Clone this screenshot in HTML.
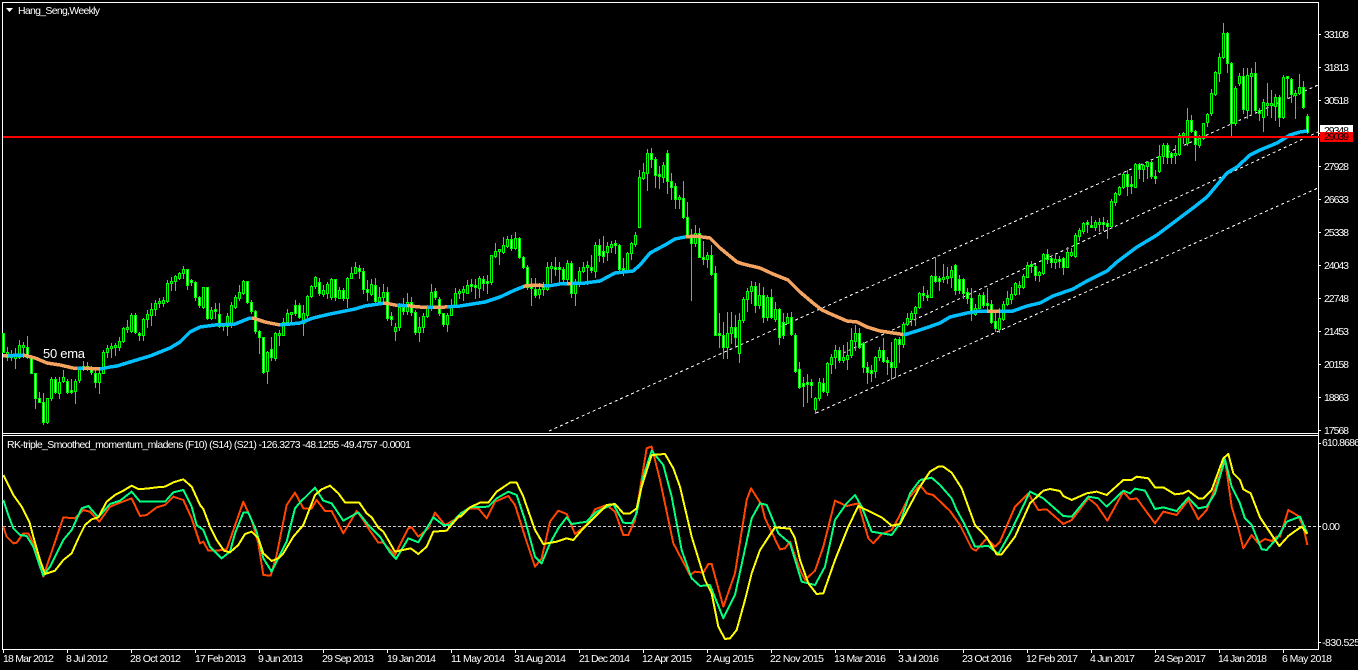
<!DOCTYPE html>
<html><head><meta charset="utf-8"><title>Hang_Seng,Weekly</title>
<style>
html,body{margin:0;padding:0;background:#000;width:1358px;height:670px;overflow:hidden}
svg{display:block}
text{font-family:"Liberation Sans",sans-serif;font-size:10.5px;fill:#fff}
.c{shape-rendering:crispEdges;fill:none}
</style></head><body>
<svg xmlns="http://www.w3.org/2000/svg" width="1358" height="670" viewBox="0 0 1358 670">
<defs>
<polyline id="ema" fill="none" points="3,356 23,355 35,358 47,363 60,365 73,368 83,368 100,369 110,367 117,366 130,362 150,356 170,348 180,342 190,332 200,327 215,325 235,324 250,318 253,318 265,322 280,325 300,323 313,318 330,314 340,312 355,309 365,306 385,303 395,305 410,306 420,307 445,307 460,306 485,302 500,297 515,290 525,286 535,285 548,286 560,284 585,283 600,281 615,273 633,271 640,265 650,253 665,245 675,239 685,237 695,236 710,238 720,248 737,262 743,264 760,268 773,274 788,280 800,292 813,303 822,310 833,315 847,321 857,322 867,327 880,331 900,334 907,334 923,329 940,323 950,317 967,313 980,311 1013,311 1027,306 1040,303 1053,296 1073,289 1087,281 1107,271 1117,262 1137,247 1157,235 1173,223 1193,208 1207,197 1217,185 1227,173 1237,167 1250,155 1260,150 1277,143 1290,135 1300,132 1307,131"/>
<clipPath id="or"><rect x="3" y="300" width="5" height="100"/><rect x="23" y="300" width="54" height="100"/><rect x="83" y="300" width="17" height="100"/><rect x="252" y="300" width="28" height="100"/><rect x="383" y="280" width="14" height="60"/><rect x="407" y="280" width="20" height="60"/><rect x="433" y="280" width="14" height="60"/><rect x="523" y="270" width="21" height="40"/><rect x="567" y="270" width="5" height="40"/><rect x="686" y="220" width="217" height="130"/><rect x="987" y="300" width="13" height="20"/></clipPath>
</defs>

<g class="c" stroke="#fff" stroke-width="1">
<path d="M2.5 2.5H1318.5V649.5H2.5Z"/>
<path d="M2 433.5H1319M2 435.5H1319"/>
<path d="M3.5 650V653"/>
<path d="M1318 34.5h3M1318 67.5h3M1318 100.5h3M1318 133.5h3M1318 166.5h3M1318 199.5h3M1318 232.5h3M1318 265.5h3M1318 298.5h3M1318 331.5h3M1318 364.5h3M1318 397.5h3M1318 430.5h3M1318 443.5h3M1318 526.5h3M1318 642.5h3"/>
<path d="M67.5 650v3M131.5 650v3M195.5 650v3M259.5 650v3M323.5 650v3M387.5 650v3M451.5 650v3M515.5 650v3M579.5 650v3M643.5 650v3M707.5 650v3M771.5 650v3M835.5 650v3M899.5 650v3M963.5 650v3M1027.5 650v3M1091.5 650v3M1155.5 650v3M1219.5 650v3M1283.5 650v3"/>
</g>

<g class="c" stroke="#fff" stroke-width="1" stroke-dasharray="3 3">
<path d="M549 431L1318 85"/>
<path d="M843 353L1318 132"/>
<path d="M816 413L1318 188"/>
</g>

<g class="c" transform="translate(.5 0)">
<path stroke="#0f0" stroke-width="1" d="M3 333V353M7 347V361M11 350V361M15 348V369M19 340V359M23 342V358M27 336V359M31 355V374M35 373V409M39 392V403M43 393V425M47 398V424M51 377V401M55 377V394M59 377V399M63 370V383M67 379V394M71 379V394M75 379V404M79 367V383M83 361V371M87 362V371M91 366V375M95 368V388M99 370V394M103 350V374M107 345V358M111 343V358M115 343V356M119 337V351M123 327V343M127 320V333M131 313V333M135 313V334M139 332V341M143 318V341M147 310V328M151 303V326M155 300V316M159 298V308M163 297V307M167 280V303M171 277V291M175 275V291M179 272V280M183 266V279M187 269V290M191 279V286M195 281V301M199 296V308M203 287V309M207 287V320M211 307V320M215 303V319M219 303V328M223 325V331M227 313V336M231 302V328M235 295V309M239 285V301M243 280V295M247 281V304M251 300V314M255 310V334M259 330V354M263 337V374M267 351V384M271 337V361M275 332V361M279 330V346M283 318V336M287 309V324M291 312V324M295 300V316M299 303V319M303 305V336M307 295V318M311 285V298M315 276V289M319 278V296M323 285V297M327 282V299M331 278V300M335 279V301M339 287V299M343 288V301M347 277V308M351 267V279M355 262V274M359 265V279M363 268V294M367 280V301M371 279V296M375 278V304M379 287V304M383 284V302M387 287V321M391 312V326M395 323V341M399 303V331M403 298V315M407 293V315M411 297V316M415 310V335M419 317V342M423 313V333M427 305V318M431 284V311M435 288V300M439 297V316M443 313V327M447 313V332M451 299V316M455 288V308M459 289V299M463 286V301M467 280V294M471 279V292M475 279V299M479 276V298M483 276V291M487 275V294M491 255V285M495 243V258M499 249V265M503 237V254M507 236V248M511 235V251M515 232V250M519 237V259M523 256V269M527 265V290M531 278V306M535 278V298M539 283V299M543 282V296M547 262V291M551 262V283M555 257V276M559 262V283M563 267V283M567 260V284M571 261V298M575 279V306M579 267V287M583 262V273M587 261V285M591 255V273M595 242V278M599 239V262M603 236V263M607 242V261M611 241V253M615 240V254M619 244V271M623 258V276M627 252V273M631 242V260M635 232V247M639 170V228M643 163V180M647 149V191M651 148V168M655 157V188M659 166V189M663 162V183M667 150V194M671 173V200M675 183V209M679 195V209M683 181V219M687 202V238M691 229V301M695 225V247M699 228V258M703 241V265M707 252V268M711 245V276M715 266V336M719 313V348M723 322V359M727 312V359M731 312V344M735 315V346M739 313V363M743 297V323M747 288V312M751 281V304M755 282V313M759 283V309M763 287V323M767 295V321M771 289V319M775 302V322M779 308V345M783 313V339M787 313V324M791 312V336M795 333V373M799 362V389M803 377V407M807 374V403M811 379V398M815 397V414M819 378V401M823 378V393M827 362V396M831 354V374M835 345V369M839 347V363M843 345V363M847 342V370M851 328V358M855 325V351M859 328V349M863 342V373M867 362V384M871 365V382M875 356V378M879 347V361M883 338V363M887 357V375M891 342V380M895 338V378M899 337V363M903 322V348M907 313V326M911 311V326M915 306V326M919 292V309M923 286V301M927 290V301M931 275V298M935 257V283M939 276V291M943 264V283M947 267V284M951 266V288M955 264V295M959 275V294M963 278V299M967 288V304M971 288V321M975 304V316M979 293V309M983 292V308M987 288V313M991 300V324M995 313V332M999 308V333M1003 301V321M1007 291V306M1011 287V304M1015 282V296M1019 281V295M1023 274V289M1027 262V278M1031 261V273M1035 264V281M1039 271V282M1043 253V275M1047 249V264M1051 256V268M1055 255V269M1059 256V268M1063 257V275M1067 247V268M1071 248V257M1075 233V258M1079 228V241M1083 222V234M1087 220V233M1091 216V228M1095 220V231M1099 218V232M1103 217V231M1107 220V239M1111 199V228M1115 192V206M1119 186V196M1123 173V189M1127 170V196M1131 176V194M1135 163V188M1139 163V179M1143 164V182M1147 161V179M1151 161V179M1155 170V184M1159 145V173M1163 143V164M1167 143V164M1171 152V164M1175 145V164M1179 133V156M1183 132V144M1187 108V146M1191 115V133M1195 130V161M1199 135V148M1203 123V140M1207 113V127M1211 89V116M1215 71V96M1219 53V82M1223 23V59M1227 32V73M1231 62V137M1235 86V126M1239 73V86M1243 68V114M1247 68V119M1251 68V114M1255 62V114M1259 108V121M1263 99V132M1267 83V116M1271 90V118M1275 94V121M1279 95V127M1283 75V119M1287 76V98M1291 78V103M1295 90V119M1299 74V95M1303 81V109M1307 114V134"/>
<path stroke="#0f0" stroke-width="3" d="M3 333V353M7 352V358M11 354V358M15 355V359M19 345V358M23 345V348M27 347V358M31 358V374M35 373V399M39 398V403M43 402V423M47 398V423M51 379V399M55 379V393M59 382V394M63 377V382M67 381V393M71 390V393M75 381V392M79 368V381M83 366V369M87 366V369M91 368V373M95 373V383M99 373V383M103 352V374M107 348V353M111 346V349M115 345V348M119 341V348M123 328V342M127 327V330M131 315V332M135 315V333M139 333V336M143 319V336M147 314V320M151 309V316M155 303V310M159 301V304M163 300V304M167 283V302M171 281V284M175 276V282M179 273V279M183 269V274M187 269V286M191 280V283M195 282V298M199 297V306M203 287V308M207 287V319M211 310V319M215 309V312M219 314V327M223 324V327M227 316V327M231 305V324M235 297V308M239 292V299M243 281V294M247 281V303M251 302V312M255 311V332M259 331V338M263 337V373M267 352V372M271 349V358M275 333V359M279 333V336M283 322V336M287 313V323M291 312V315M295 305V314M299 305V318M303 313V324M307 296V316M311 286V297M315 277V287M319 282V294M323 290V295M327 284V294M331 279V298M335 279V298M339 290V299M343 290V299M347 278V299M351 273V279M355 267V274M359 268V272M363 271V290M367 289V293M371 284V295M375 285V302M379 297V302M383 292V298M387 292V319M391 316V320M395 327V332M399 307V328M403 307V312M407 302V312M411 302V313M415 312V333M419 327V333M423 316V328M427 308V317M431 292V309M435 291V298M439 299V314M443 313V325M447 315V325M451 306V316M455 293V307M459 291V294M463 289V293M467 285V294M471 284V287M475 285V288M479 278V289M483 279V284M487 281V284M491 255V283M495 251V257M499 249V252M503 245V253M507 239V247M511 239V249M515 238V249M519 238V258M523 257V268M527 267V288M531 286V289M535 289V296M539 289V295M543 287V290M547 267V290M551 266V269M555 267V270M559 267V270M563 269V280M567 263V280M571 263V294M575 284V294M579 271V285M583 267V272M587 265V268M591 267V271M595 245V272M599 245V256M603 251V257M607 246V253M611 244V248M615 243V246M619 245V270M623 268V271M627 253V271M631 243V254M635 235V245M639 177V228M643 172V179M647 153V174M651 153V160M655 159V176M659 174V177M663 165V178M667 153V182M671 181V188M675 186V200M679 197V200M683 198V218M687 217V238M691 237V244M695 233V244M699 233V258M703 257V260M707 255V260M711 255V275M715 273V336M719 333V336M723 335V348M727 333V348M731 327V334M735 327V338M739 320V354M743 299V321M747 291V300M751 286V292M755 286V306M759 295V306M763 295V318M767 297V318M771 297V318M775 309V320M779 309V338M783 322V336M787 317V324M791 317V335M795 335V372M799 369V388M803 383V387M807 382V385M811 382V386M815 398V410M819 382V399M823 383V392M827 363V393M831 357V365M835 350V358M839 350V361M843 357V361M847 355V360M851 340V356M855 333V342M859 333V348M863 343V368M867 367V373M871 370V374M875 357V372M879 350V358M883 350V362M887 360V363M891 362V368M895 339V368M899 339V345M903 324V345M907 318V325M911 313V320M915 307V314M919 293V308M923 293V296M927 295V298M931 276V298M935 276V282M939 278V282M943 277V280M947 276V279M951 270V278M955 265V291M959 279V291M963 279V294M967 292V299M971 298V313M975 308V315M979 295V309M983 295V306M987 303V306M991 304V323M995 321V329M999 318V330M1003 304V320M1007 298V305M1011 294V300M1015 283V295M1019 285V288M1023 276V288M1027 265V278M1031 264V267M1035 266V276M1039 272V276M1043 254V274M1047 254V260M1051 258V263M1055 259V263M1059 259V262M1063 258V268M1067 252V268M1071 252V256M1075 235V257M1079 230V237M1083 223V232M1087 222V225M1091 225V228M1095 222V228M1099 222V225M1103 222V225M1107 223V227M1111 201V227M1115 193V203M1119 187V195M1123 174V188M1127 174V187M1131 184V187M1135 164V188M1139 164V170M1143 165V170M1147 162V167M1151 162V177M1155 176V179M1159 156V172M1163 145V157M1167 145V158M1171 153V158M1175 153V156M1179 135V155M1183 133V136M1187 120V144M1191 120V132M1195 131V145M1199 138V146M1203 123V139M1207 114V123M1211 93V114M1215 72V95M1219 57V74M1223 33V58M1227 33V64M1231 63V124M1235 88V124M1239 76V84M1243 76V110M1247 75V111M1251 73V77M1255 73V111M1259 110V114M1263 102V118M1267 103V106M1271 103V106M1275 97V107M1279 97V118M1283 77V118M1287 76V79M1291 79V95M1295 93V96M1299 87V94M1303 87V108M1307 116V133"/>
<path stroke="#fff" stroke-width="1" d="M3 334V352M27 348V357M31 359V373M35 374V398M39 399V402M43 403V422M55 380V392M67 382V392M71 391V392M91 369V372M95 374V382M135 316V332M139 334V335M187 270V285M191 281V282M195 283V297M199 298V305M207 288V318M215 310V311M219 315V326M247 282V302M251 303V311M255 312V331M259 332V337M263 338V372M271 350V357M295 306V313M299 306V317M319 283V293M335 280V297M343 291V298M359 269V271M363 272V289M367 290V292M375 286V301M387 293V318M391 317V319M403 308V311M411 303V312M415 313V332M435 292V297M439 300V313M443 314V324M471 285V286M475 286V287M483 280V283M487 282V283M511 240V248M519 239V257M523 258V267M527 268V287M531 287V288M535 290V295M555 268V269M559 268V269M563 270V279M571 264V293M591 268V270M599 246V255M603 252V256M615 244V245M619 246V269M623 269V270M651 154V159M655 160V175M659 175V176M667 154V181M671 182V187M675 187V199M683 199V217M687 218V237M691 238V243M699 234V257M703 258V259M711 256V274M715 274V335M719 334V335M723 336V347M735 328V337M755 287V305M763 296V317M771 298V317M779 310V337M783 323V335M791 318V334M795 336V371M799 370V387M803 384V386M807 383V384M811 383V385M823 384V391M839 351V360M859 334V347M863 344V367M867 368V372M871 371V373M883 351V361M887 361V362M891 363V367M899 340V344M923 294V295M927 296V297M935 277V281M939 279V281M955 266V290M959 280V290M963 280V293M967 293V298M971 299V312M983 296V305M987 304V305M991 305V322M995 322V328M1031 265V266M1035 267V275M1047 255V259M1051 259V262M1059 260V261M1063 259V267M1087 223V224M1091 226V227M1103 223V224M1107 224V226M1127 175V186M1131 185V186M1139 165V169M1151 163V176M1155 177V178M1167 146V157M1171 154V157M1191 121V131M1195 132V144M1227 34V63M1231 64V123M1243 77V109M1255 74V110M1259 111V113M1279 98V117M1287 77V78M1291 80V94M1303 88V107M1307 117V132"/>
<path stroke="#000" stroke-width="1" d="M7 353V357M11 355V357M15 356V358M19 346V357M23 346V347M47 399V422M51 380V398M59 383V393M63 378V381M75 382V391M79 369V380M83 367V368M87 367V368M99 374V382M103 353V373M107 349V352M111 347V348M115 346V347M119 342V347M123 329V341M127 328V329M131 316V331M143 320V335M147 315V319M151 310V315M155 304V309M159 302V303M163 301V303M167 284V301M171 282V283M175 277V281M179 274V278M183 270V273M203 288V307M211 311V318M227 317V326M231 306V323M235 298V307M239 293V298M243 282V293M267 353V371M275 334V358M279 334V335M283 323V335M287 314V322M291 313V314M303 314V323M307 297V315M311 287V296M315 278V286M323 291V294M327 285V293M331 280V297M339 291V298M347 279V298M351 274V278M355 268V273M371 285V294M379 298V301M383 293V297M395 328V331M399 308V327M407 303V311M419 328V332M423 317V327M427 309V316M431 293V308M447 316V324M451 307V315M455 294V306M459 292V293M463 290V292M467 286V293M479 279V288M491 256V282M495 252V256M499 250V251M503 246V252M507 240V246M515 239V248M539 290V294M543 288V289M547 268V289M551 267V268M567 264V279M575 285V293M579 272V284M583 268V271M587 266V267M595 246V271M607 247V252M611 245V247M627 254V270M631 244V253M635 236V244M639 178V227M643 173V178M647 154V173M663 166V177M679 198V199M695 234V243M707 256V259M727 334V347M731 328V333M739 321V353M743 300V320M747 292V299M751 287V291M759 296V305M767 298V317M775 310V319M787 318V323M815 399V409M819 383V398M827 364V392M831 358V364M835 351V357M843 358V360M847 356V359M851 341V355M855 334V341M875 358V371M879 351V357M895 340V367M903 325V344M907 319V324M911 314V319M915 308V313M919 294V307M931 277V297M943 278V279M947 277V278M951 271V277M975 309V314M979 296V308M999 319V329M1003 305V319M1007 299V304M1011 295V299M1015 284V294M1019 286V287M1023 277V287M1027 266V277M1039 273V275M1043 255V273M1055 260V262M1067 253V267M1071 253V255M1075 236V256M1079 231V236M1083 224V231M1095 223V227M1099 223V224M1111 202V226M1115 194V202M1119 188V194M1123 175V187M1135 165V187M1143 166V169M1147 163V166M1159 157V171M1163 146V156M1175 154V155M1179 136V154M1183 134V135M1187 121V143M1199 139V145M1203 124V138M1207 115V122M1211 94V113M1215 73V94M1219 58V73M1223 34V57M1235 89V123M1239 77V83M1247 76V110M1251 74V76M1263 103V117M1267 104V105M1271 104V105M1275 98V106M1283 78V117M1295 94V95M1299 88V93"/>
</g>

<use href="#ema" class="c" stroke="#00bfff" stroke-width="3.5"/>
<g clip-path="url(#or)"><use href="#ema" class="c" stroke="#f4a460" stroke-width="3.5"/></g>

<rect x="3" y="136" width="1317" height="2" fill="#ff0000"/>

<rect x="1320" y="125" width="33" height="8" fill="#fff"/>
<text x="1324" y="134" textLength="25" style="fill:#000">29348</text>
<rect x="1320" y="132" width="33" height="10" fill="#ff0000"/>
<text x="1324" y="140" textLength="25" style="fill:#000">29039</text>
<g>
<text x="1324" y="38" textLength="25">33108</text>
<text x="1324" y="71" textLength="25">31813</text>
<text x="1324" y="104" textLength="25">30518</text>
<text x="1324" y="170" textLength="25">27928</text>
<text x="1324" y="203" textLength="25">26633</text>
<text x="1324" y="236" textLength="25">25338</text>
<text x="1324" y="269" textLength="25">24043</text>
<text x="1324" y="302" textLength="25">22748</text>
<text x="1324" y="335" textLength="25">21453</text>
<text x="1324" y="368" textLength="25">20158</text>
<text x="1324" y="401" textLength="25">18863</text>
<text x="1324" y="434" textLength="25">17568</text>
<text x="1322" y="446" textLength="38">610.8686</text>
<text x="1322" y="530" textLength="18">0.00</text>
<text x="1322" y="646" textLength="38">-830.525</text>
</g>

<path d="M6 8h7l-3.5 4z" fill="#fff"/>
<text x="18" y="14" textLength="82">Hang_Seng,Weekly</text>
<text x="43" y="358" textLength="42" style="font-size:13px">50 ema</text>
<text x="7" y="448" textLength="404">RK-triple_Smoothed_momentum_mladens (F10) (S14) (S21) -126.3273 -48.1255 -49.4757 -0.0001</text>

<path class="c" d="M3 526.5H1318" stroke="#d0d0d0" stroke-dasharray="3 2"/>

<g class="c" stroke-width="2" stroke-linejoin="round">
<g stroke="#ff4500">
<polyline transform="translate(0,430) scale(.33333)" stroke-width="6" points="10,290 20,320 40,340 50,338 70,310 85,310 100,340 130,440 150,380 190,262 225,265 250,240 270,245 298,275 330,230 355,220 395,205 420,258 440,255 470,232 495,225 520,200 550,210 575,265 600,340 610,335 625,362 650,362 680,358 730,215 755,270 775,340 790,435 812,437 830,375 860,225 885,188 910,235 935,235 950,210 975,243 995,243 1030,310 1070,243 1090,270 1105,295 1135,338 1150,338 1185,375 1205,335 1225,295 1235,292 1255,320 1285,295 1305,248 1335,285 1380,260"/>
<polyline transform="translate(460,430) scale(.33333)" stroke-width="6" points="0,250 30,235 55,235 80,265 105,215 145,198 165,225 195,320 225,410 245,385 270,275 295,242 320,252 345,312 380,285 405,238 440,225 465,245 490,315 505,315 525,270 560,55 575,50 600,150 640,340 690,435 705,425 730,428 745,402 755,402 790,530 825,430 860,210 873,175 905,225 915,265 960,358 975,355 990,335 1020,420 1035,450 1065,422 1090,350 1125,212 1160,228 1195,220 1225,325 1240,340 1265,312 1295,300 1320,255 1345,205 1380,165"/>
<polyline transform="translate(900,430) scale(.33333)" stroke-width="6" points="60,165 80,190 100,195 150,243 180,285 215,355 228,362 260,325 285,350 300,335 345,230 385,190 415,240 440,238 490,282 515,270 565,205 590,225 622,272 670,185 690,208 710,205 765,280 790,245 830,255 865,210 895,268 920,240 945,175 975,88 995,230 1015,295 1030,355 1055,315 1075,340 1095,327 1115,333 1130,320 1140,320 1165,240 1195,258 1210,290 1222,345"/>
</g>
<g stroke="#00ff7f">
<polyline transform="translate(0,430) scale(.33333)" stroke-width="6" points="10,210 25,255 40,295 60,315 80,318 100,350 120,410 130,437 150,410 190,330 215,300 245,235 265,228 295,262 330,222 360,212 395,185 420,215 495,215 520,187 550,180 575,230 590,285 610,300 630,350 665,385 690,365 705,310 730,248 745,248 770,305 790,385 815,425 860,335 885,235 900,217 945,173 970,212 995,220 1030,272 1075,247 1105,285 1140,320 1170,367 1188,387 1225,325 1255,337 1300,262 1330,285 1350,285 1380,252"/>
<polyline transform="translate(460,430) scale(.33333)" stroke-width="6" points="0,252 30,232 85,230 110,205 145,185 170,195 195,270 225,380 245,400 270,340 295,295 320,262 335,282 380,275 410,245 460,222 490,278 515,280 530,250 550,140 575,62 610,105 635,200 665,360 695,445 720,468 750,465 790,565 825,495 875,265 900,220 920,225 955,310 990,340 1025,455 1065,465 1095,410 1125,270 1160,220 1185,195 1205,230 1235,305 1295,315 1320,280 1350,190 1380,150"/>
<polyline transform="translate(900,430) scale(.33333)" stroke-width="6" points="60,150 95,143 120,165 155,205 170,240 195,285 225,350 265,348 295,372 330,310 390,185 430,205 490,258 515,260 565,200 595,205 620,230 670,182 690,190 705,176 735,182 765,237 790,232 830,243 865,203 895,235 920,230 945,190 975,88 995,170 1020,220 1035,265 1055,285 1085,358 1100,360 1135,320 1160,275 1200,260 1222,310"/>
</g>
<g stroke="#ffff00">
<polyline transform="translate(0,430) scale(.33333)" stroke-width="6" points="10,135 40,195 65,230 88,275 100,320 120,390 135,432 165,422 190,390 215,370 235,325 255,285 275,268 295,262 320,215 345,195 365,185 395,167 415,177 440,176 470,172 495,170 520,157 550,148 575,170 600,225 610,237 630,290 650,330 672,362 690,367 715,345 735,312 755,305 775,325 790,370 815,393 835,385 850,370 880,320 910,285 945,195 965,178 990,167 1015,190 1035,217 1078,218 1100,250 1115,262 1135,293 1150,305 1185,365 1232,355 1255,372 1280,350 1300,305 1340,302 1380,255"/>
<polyline transform="translate(460,430) scale(.33333)" stroke-width="6" points="0,262 30,232 60,218 85,218 110,185 150,158 170,158 190,200 225,300 250,342 290,335 320,325 340,330 370,295 400,265 440,225 465,222 490,250 510,250 530,235 545,170 575,75 615,72 640,115 660,170 695,320 735,450 755,490 775,590 795,627 810,625 830,600 855,510 875,430 900,360 945,292 990,296 1005,325 1020,390 1045,460 1070,492 1090,490 1125,390 1165,290 1195,228 1240,250 1265,262 1295,287 1320,282 1345,235 1380,170"/>
<polyline transform="translate(900,430) scale(.33333)" stroke-width="6" points="60,170 90,125 115,110 130,110 155,128 185,175 225,285 260,322 290,373 305,373 345,320 390,220 430,182 450,177 480,183 490,198 515,210 560,190 590,185 620,195 670,150 695,150 710,140 745,145 765,172 790,172 825,193 850,190 865,182 895,205 910,205 935,180 970,85 985,72 1000,130 1020,150 1030,178 1052,190 1080,262 1120,322 1138,348 1165,318 1190,300 1205,290 1222,312"/>
</g>
</g>

<g>
<text x="3" y="662" textLength="51">18 Mar 2012</text>
<text x="66" y="662" textLength="42">8 Jul 2012</text>
<text x="130" y="662" textLength="51">28 Oct 2012</text>
<text x="195" y="662" textLength="51">17 Feb 2013</text>
<text x="258" y="662" textLength="45">9 Jun 2013</text>
<text x="322" y="662" textLength="52">29 Sep 2013</text>
<text x="387" y="662" textLength="49">19 Jan 2014</text>
<text x="451" y="662" textLength="54">11 May 2014</text>
<text x="514" y="662" textLength="52">31 Aug 2014</text>
<text x="579" y="662" textLength="51">21 Dec 2014</text>
<text x="642" y="662" textLength="50">12 Apr 2015</text>
<text x="706" y="662" textLength="48">2 Aug 2015</text>
<text x="770" y="662" textLength="54">22 Nov 2015</text>
<text x="834" y="662" textLength="52">13 Mar 2016</text>
<text x="898" y="662" textLength="41">3 Jul 2016</text>
<text x="962" y="662" textLength="50">23 Oct 2016</text>
<text x="1026" y="662" textLength="52">12 Feb 2017</text>
<text x="1090" y="662" textLength="45">4 Jun 2017</text>
<text x="1154" y="662" textLength="52">24 Sep 2017</text>
<text x="1218" y="662" textLength="49">14 Jan 2018</text>
<text x="1282" y="662" textLength="50">6 May 2018</text>
</g>
</svg>
</body></html>
